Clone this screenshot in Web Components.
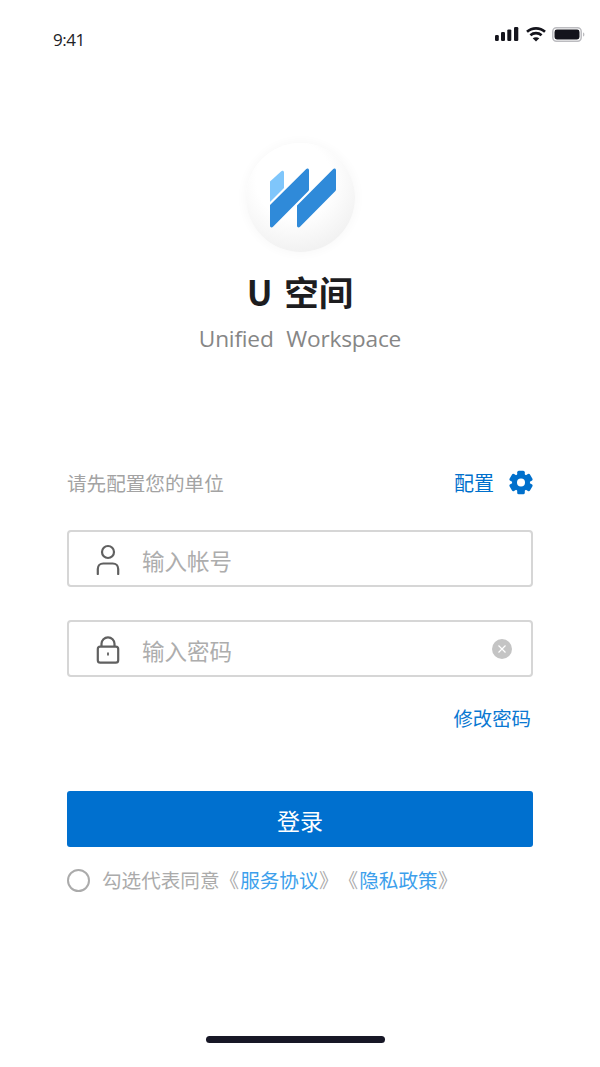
<!DOCTYPE html>
<html lang="zh">
<head>
<meta charset="utf-8">
<title>U 空间</title>
<style>
  html, body { margin: 0; height: 100%; background: #fff; }
  body { font-family: "Open Sans", "Noto Sans CJK SC", sans-serif; overflow: hidden; }
</style>
</head>
<body>
<login-page></login-page>

<script>
const CJK = `"Noto Sans CJK SC", "Noto Sans", sans-serif`;

class StatusBar extends HTMLElement {
    connectedCallback() {
        this.attachShadow({ mode: 'open' }).innerHTML = `
<style>
    :host { display: flex; justify-content: space-between; align-items: flex-start; height: 50px; padding: 27px 15px 0 53px; }
    .time { font: 400 17px/25px "Open Sans", sans-serif; color: #222226; letter-spacing: -0.5px; }
    .icons { display: flex; align-items: flex-start; gap: 6px; }
    .signal { margin-right: 1px; }
    svg { display: block; }
</style>
<span class="time">9:41</span>
<div class="icons">
    <svg class="signal" width="24" height="14" viewBox="0 0 24 14" fill="#14141c">
        <rect x="0" y="8" width="3.800" height="6" rx="1.300"/><rect x="6" y="5" width="4" height="9" rx="1.200"/>
        <rect x="12.300" y="2.400" width="4" height="11.600" rx="1.200"/><rect x="19" y="0" width="4.300" height="14" rx="1.200"/>
    </svg>
    <svg width="20" height="15" viewBox="0 0 20 15" fill="none" stroke="#14141c" stroke-width="2.600">
        <path d="M1 4.800C6 .2 14 .2 19 4.800"/><path d="M4.400 8.200C7.600 5.400 12.400 5.400 15.600 8.200"/>
        <path d="M10 14.600l-3.300-3.300c1.900-1.500 4.700-1.500 6.600 0z" fill="#14141c" stroke="none"/>
    </svg>
    <svg width="33" height="15" viewBox="0 0 33 15">
        <rect x=".8" y=".8" width="28.400" height="13.400" rx="3.600" fill="none" stroke="#bcbcc0" stroke-width="1.500"/>
        <rect x="2.500" y="2.500" width="25" height="10" rx="2.400" fill="#14141c"/>
        <path d="M31 5.500c1 .3 1.400 1.100 1.400 2s-.4 1.700-1.400 2z" fill="#bcbcc0"/>
    </svg>
</div>`;
    }
}
customElements.define('status-bar', StatusBar);

class AppBrand extends HTMLElement {
    connectedCallback() {
        this.attachShadow({ mode: 'open' }).innerHTML = `
<style>
    :host { display: flex; flex-direction: column; align-items: center; margin-top: 66px; }
    .logo { width: 109px; height: 109px; border-radius: 50%; background: radial-gradient(circle at 44% 34%, #ffffff 40%, #e9e9e9 100%); box-shadow: 0 0 8px 3px #fafafa; display: flex; align-items: center; justify-content: center; }
    .logo svg { margin: 1px 0 0 6px; }
    h1 { margin: 16px 0 0; font: 700 34.500px/46px ${CJK}; color: #1d1d1f; word-spacing: 4px; }
    p { margin: 8px 0 0; font: 400 22.700px/34px "Open Sans", sans-serif; color: #868686; word-spacing: 7px; letter-spacing: -0.2px; }
</style>
<div class="logo">
    <svg width="66" height="60" viewBox="0 0 66 60">
        <path d="M0 13.500L11 3.400C12.200 2.300 14 2.800 14 4.400V20L0 34z" fill="#7fc6fb"/>
        <path d="M0 37L36 1.200C37.200 0 39 .6 39 2.200V21.600C39 22.200 38.800 22.700 38.400 23.100L3 58.800C1.800 60 0 59.400 0 57.800z" fill="#2f8ad9"/>
        <path d="M27 37.600L63 1.200C64.200 0 66 .6 66 2.200V21.600C66 22.200 65.800 22.700 65.400 23.100L30 58.800C28.800 60 27 59.400 27 57.800z" fill="#2f8ad9"/>
    </svg>
</div>
<h1>U 空间</h1>
<p>Unified Workspace</p>`;
    }
}
customElements.define('app-brand', AppBrand);

class TextField extends HTMLElement {
    connectedCallback() {
        this.attachShadow({ mode: 'open' }).innerHTML = `
<style>
    :host { display: flex; align-items: center; height: 57px; box-sizing: border-box; border: 2px solid #d6d6d6; border-radius: 4px; padding: 0 19px 0 26px; background: #fff; }
    .icon { width: 26px; height: 32px; display: flex; }
    .label { margin-left: 21px; font: 400 22.500px/30px ${CJK}; color: #adadad; flex: 1; padding-top: 3px; }
    ::slotted(svg) { display: block; }
</style>
<div class="icon"><slot name="icon"></slot></div>
<span class="label">${this.getAttribute('placeholder') || ''}</span>
<slot name="trailing"></slot>`;
    }
}
customElements.define('text-field', TextField);

class LoginForm extends HTMLElement {
    connectedCallback() {
        this.attachShadow({ mode: 'open' }).innerHTML = `
<style>
    :host { display: block; margin: 111px 67px 0; font-family: ${CJK}; }
    .unit { display: flex; align-items: center; height: 30px; font-size: 19.600px; color: #a3a3a3; }
    .unit span { flex: 1; }
    .unit a { color: #0070cc; font-size: 20px; margin-right: 15px; }
    svg { display: block; }
    text-field { margin-top: 33px; }
    .change { text-align: right; margin-top: 26px; padding-right: 2px; font-size: 19.400px; line-height: 30px; color: #0a78d2; }
    button { display: block; width: 100%; height: 56px; margin-top: 58px; padding: 1px 0 0; border: 0; border-radius: 3px; background: #0070cf; color: #fff; font: 400 23px/30px ${CJK}; }
    .agree { display: flex; align-items: center; margin-top: 18px; font-size: 19.600px; line-height: 30px; color: #ababab; white-space: nowrap; text-spacing-trim: space-all; }
    .radio { width: 19px; height: 19px; border: 2px solid #ababab; border-radius: 50%; margin-right: 12px; flex: none; }
    .agree a { color: #3d9fec; margin: 0 .5px 0 1px; }
</style>
<div class="unit">
    <span>请先配置您的单位</span>
    <a>配置</a>
    <svg width="24" height="25" viewBox="-12 -12.500 24 25" fill="#0070cc">
        <circle r="9"/>
        <rect x="-3.800" y="-11.800" width="7.600" height="6" rx="1.600"/>
        <rect x="-3.800" y="-11.800" width="7.600" height="6" rx="1.600" transform="rotate(60)"/>
        <rect x="-3.800" y="-11.800" width="7.600" height="6" rx="1.600" transform="rotate(120)"/>
        <rect x="-3.800" y="-11.800" width="7.600" height="6" rx="1.600" transform="rotate(180)"/>
        <rect x="-3.800" y="-11.800" width="7.600" height="6" rx="1.600" transform="rotate(240)"/>
        <rect x="-3.800" y="-11.800" width="7.600" height="6" rx="1.600" transform="rotate(300)"/>
        <circle r="4" fill="#fff"/>
    </svg>
</div>
<text-field placeholder="输入帐号">
    <svg slot="icon" width="26" height="32" viewBox="0 0 26 32" fill="none" stroke="#606060" stroke-width="2.200">
        <circle cx="13" cy="9" r="6"/>
        <path d="M2.800 31v-5c0-3.300 2.200-5.500 5.500-5.500h9.400c3.300 0 5.500 2.200 5.500 5.500v5" stroke-linecap="round"/>
    </svg>
</text-field>
<text-field placeholder="输入密码">
    <svg slot="icon" width="26" height="32" viewBox="0 0 26 32" fill="none" stroke="#606060" stroke-width="2.200">
        <path d="M6.500 13.500V10.800a6.500 6.500 0 0113 0V13.500"/>
        <rect x="2.800" y="13.600" width="20.400" height="16" rx="2.400"/>
        <path d="M13 19.500v3" stroke-width="1.800"/>
    </svg>
    <svg slot="trailing" width="20" height="20" viewBox="0 0 20 20">
        <circle cx="10" cy="10" r="10" fill="#c4c4c4"/>
        <path d="M6.500 6.500l7 7M13.500 6.500l-7 7" stroke="#fff" stroke-width="1.200"/>
    </svg>
</text-field>
<div class="change">修改密码</div>
<button>登录</button>
<div class="agree"><div class="radio"></div>勾选代表同意《<a>服务协议</a>》《<a>隐私政策</a>》</div>`;
    }
}
customElements.define('login-form', LoginForm);

class LoginPage extends HTMLElement {
    connectedCallback() {
        this.attachShadow({ mode: 'open' }).innerHTML = `
<style>
    :host { display: flex; flex-direction: column; height: 1067px; background: #fff; }
    .home { margin: auto 0 24px 206px; width: 179px; height: 7px; border-radius: 4px; background: #171726; }
</style>
<status-bar></status-bar>
<app-brand></app-brand>
<login-form></login-form>
<div class="home"></div>`;
    }
}
customElements.define('login-page', LoginPage);
</script>
</body>
</html>
